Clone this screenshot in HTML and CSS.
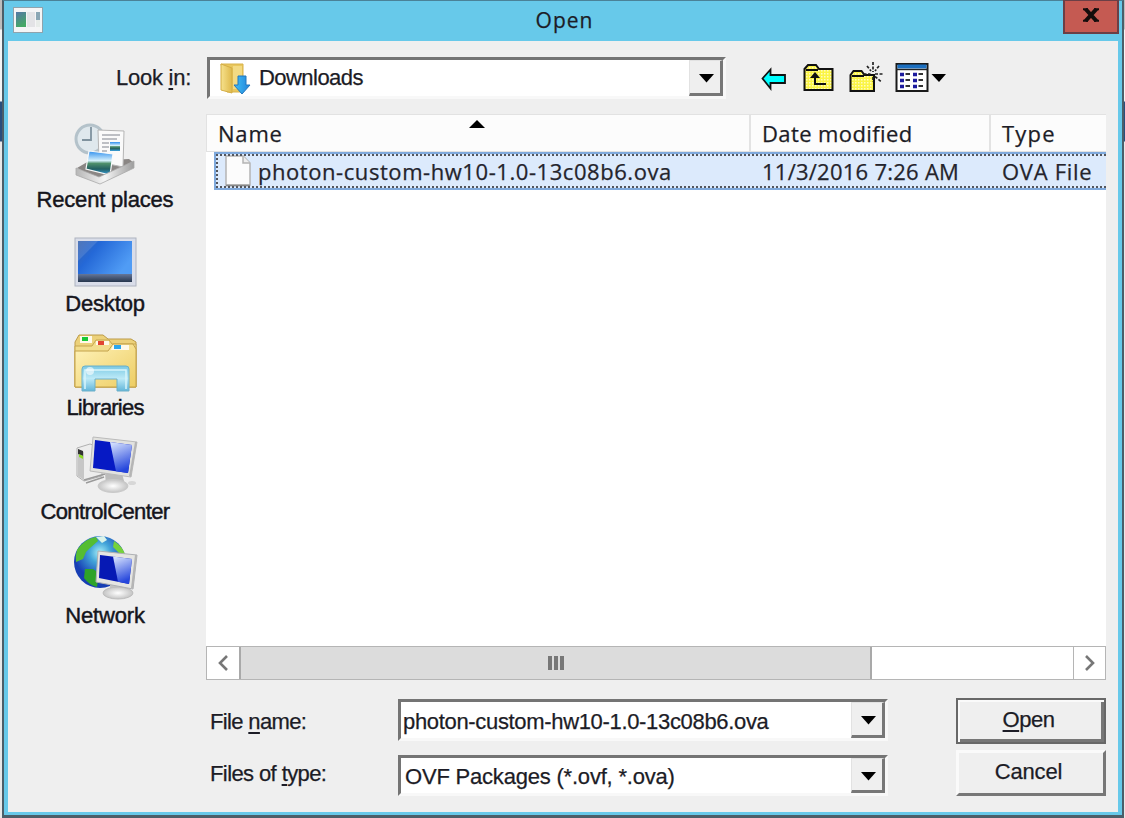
FILE: index.html
```
<!DOCTYPE html>
<html lang="en">
<head>
<meta charset="utf-8">
<title>Open</title>
<link rel="stylesheet" href="styles.css">
</head>
<body>
<div class="dialog">
  <header class="titlebar">
    <svg class="app-icon" width="32" height="28" viewBox="0 0 32 28">
      <defs><linearGradient id="app" x1="0" y1="0" x2="0.4" y2="1"><stop offset="0" stop-color="#5677a8"/><stop offset="1" stop-color="#45a866"/></linearGradient></defs>
      <rect x="1.500" y="1.500" width="29" height="25" fill="#f5f5f6" stroke="#8fa3ad"/>
      <rect x="4" y="6" width="10" height="15" fill="url(#app)"/>
      <rect x="15" y="6" width="8" height="15" fill="#e3e3e6"/>
      <rect x="24" y="6" width="4" height="8" fill="#8aa6b4"/><rect x="24" y="14" width="4" height="7" fill="#e8ece9"/>
    </svg>
    <h1 class="title ui"><span class="t-title">Open</span></h1>
    <button class="close" aria-label="Close"><svg width="16" height="14" viewBox="0 0 16 14"><path d="M2.500 1 13.500 13M13.500 1 2.500 13" stroke="#140d0c" stroke-width="4"/><path d="M0 1.200h5M11 1.200h5M0 12.800h5M11 12.800h5" stroke="#140d0c" stroke-width="2"/></svg></button>
  </header>

  <main class="body">
    <div class="look">
      <label class="look-label"><span class="t-look">Look <u>i</u>n:</span></label>
      <div class="combo combo-look">
        <svg class="folder" width="34" height="34" viewBox="0 0 34 34">
          <defs><linearGradient id="fold" x1="0" x2="1"><stop offset="0" stop-color="#f6e18c"/><stop offset="1" stop-color="#dfb94b"/></linearGradient>
          <linearGradient id="arr" x1="0" x2="1"><stop offset="0" stop-color="#3fc0f6"/><stop offset="1" stop-color="#2283da"/></linearGradient></defs>
          <path d="M3 3h22v28H9z" fill="#e9c75c" stroke="#d8b24b"/>
          <path d="M3 3l11 4v25L3 29z" fill="url(#fold)" stroke="#d4ad45"/>
          <path d="M15 5h9v23h-9z" fill="#f3da83"/>
          <path d="M20 15h8v9h4l-8 9-8-9h4z" fill="url(#arr)" stroke="#2376bd"/>
        </svg>
        <span class="combo-text t-downloads">Downloads</span>
        <span class="drop"><svg width="16" height="9" viewBox="0 0 16 9"><path d="M0 0H15L7.500 8.500z" fill="#000"/></svg></span>
      </div>
      <div class="tools">
        <svg width="26" height="40" viewBox="0 0 26 40"><path d="M1.500 20.500 9.500 11.500V17H24v8H9.500v5.500z" fill="#0ff" stroke="#111" stroke-width="1.800"/></svg>
        <svg width="32" height="40" viewBox="0 0 32 40">
          <defs><pattern id="dither" width="3" height="3" patternUnits="userSpaceOnUse"><rect width="3" height="3" fill="#fbf545"/><rect width="1.500" height="1.500" fill="#fffcc0"/></pattern></defs>
          <path d="M1.500 32V11L5 7h8l3 4h13.500v21z" fill="url(#dither)" stroke="#111" stroke-width="2"/><path d="M3 12h12" stroke="#111" stroke-width="2"/>
          <path d="M12 16v10h11" fill="none" stroke="#111" stroke-width="2"/><path d="M12 14l-5 6h10z" fill="#111"/>
        </svg>
        <svg width="34" height="40" viewBox="0 0 34 40">
          <path d="M1.500 33V17l3-4h8l3 4H25v16z" fill="url(#dither)" stroke="#111" stroke-width="2"/><path d="M3 18h12" stroke="#111" stroke-width="2"/>
          <path d="M24 4v10M24 19v5M18 8l4 5M30 8l-4 5M14.500 16h7M26 16h8M26 18.500l6 5" stroke="#222" stroke-width="1.700" stroke-dasharray="3 1.500"/>
        </svg>
        <svg width="52" height="40" viewBox="0 0 52 40">
          <rect x="1.500" y="6" width="31" height="27" fill="#fff" stroke="#1a1a1a" stroke-width="2"/><path d="M2.500 8.500h29" stroke="#1b6fc0" stroke-width="4"/><path d="M1 11.500h32" stroke="#222" stroke-width="1.400"/>
          <path d="M5 16.500h4M18 16.500h4M5 22.500h4M18 22.500h4M5 28.500h4M18 28.500h4" stroke="#1d1b9e" stroke-width="3.600"/>
          <path d="M10.500 16h4.500M23.500 16h4.500M10.500 22h4.500M23.500 22h4.500M10.500 28h4.500M23.500 28h4.500" stroke="#333" stroke-width="2"/>
          <path d="M36.500 16H51L44 24z" fill="#000"/>
        </svg>
      </div>
    </div>

    <nav class="places">
      <a class="place">
        <svg width="70" height="68" viewBox="0 0 70 68">
          <defs><linearGradient id="tray" x1="0" x2="1"><stop offset="0" stop-color="#b6b6b6"/><stop offset=".5" stop-color="#f5f5f5"/><stop offset="1" stop-color="#9d9d9d"/></linearGradient>
          <linearGradient id="photo" x1="0" y1="0" x2="0" y2="1"><stop offset="0" stop-color="#2f8fee"/><stop offset=".4" stop-color="#d5f0fb"/><stop offset=".52" stop-color="#4e8f6b"/><stop offset=".75" stop-color="#235f62"/><stop offset="1" stop-color="#3ba5e4"/></linearGradient></defs>
          <circle cx="20" cy="20" r="14" fill="#dfe8ed" stroke="#b4c2ca" stroke-width="3"/>
          <path d="M21 8v13h-9" fill="none" stroke="#7f929e" stroke-width="1.800"/>
          <path d="M7 49l12-7 40-2 5 4-34 17z" fill="#8a8684"/>
          <path d="M28 11l26 1-1 36-24-5z" fill="#fafafa" stroke="#b5b5b5"/>
          <path d="M32 16h18M32 20h15M32 24h7M32 28h7M32 32h5" stroke="#a9acb2" stroke-width="1.500"/>
          <path d="M40 23h10v9H40z" fill="url(#photo)"/>
          <path d="M19 32l24 3-3 21-24-6z" fill="url(#photo)" stroke="#f8fafa" stroke-width="1.200"/>
          <path d="M6 49l23 9 35-16v7L30 65 6 56z" fill="url(#tray)" stroke="#a9a9a9" stroke-width=".8"/>
        </svg><span class="t-recent">Recent places</span></a>
      <a class="place">
        <svg width="70" height="68" viewBox="0 0 70 68">
          <defs><linearGradient id="desk" x1="0" y1="0" x2="1" y2=".5"><stop offset="0" stop-color="#3763ae"/><stop offset=".35" stop-color="#2468d7"/><stop offset="1" stop-color="#509cf5"/></linearGradient>
          <linearGradient id="task" x1="0" y1="0" x2="0" y2="1"><stop offset="0" stop-color="#65779a"/><stop offset="1" stop-color="#27364d"/></linearGradient></defs>
          <rect x="5" y="15" width="61" height="48" fill="#d9dde9" stroke="#aeb3c0"/>
          <rect x="8" y="18" width="54" height="34" fill="url(#desk)"/><path d="M8 18h20L8 38z" fill="#fff" opacity=".12"/>
          <rect x="8" y="51" width="54" height="8" fill="url(#task)"/>
        </svg><span class="t-desktop">Desktop</span></a>
      <a class="place">
        <svg width="70" height="68" viewBox="0 0 70 68">
          <defs><linearGradient id="lib" x1="0" y1="0" x2="1" y2="1"><stop offset="0" stop-color="#fff3bb"/><stop offset="1" stop-color="#edcd63"/></linearGradient>
          <linearGradient id="clip" x1="0" y1="0" x2="0" y2="1"><stop offset="0" stop-color="#7bc9e4"/><stop offset=".5" stop-color="#bdeaf7"/><stop offset="1" stop-color="#62b6da"/></linearGradient></defs>
          <path d="M5 60V15l4-7h24l5 4h23l5 3v45z" fill="#ecd17a" stroke="#bc9b48"/>
          <path d="M10 9h12v7H10z" fill="#fff9e8"/><path d="M12 10h6v4h-6z" fill="#16c936"/>
          <path d="M5 60V19h17l4-6h13l3 4h24v43z" fill="#f2dd8d" stroke="#c6a650"/>
          <path d="M26 14h13v4H26z" fill="#fff9e8"/><path d="M28 14h6v4h-6z" fill="#e14531"/>
          <path d="M5 60V24h33l5-7h20l3 5v38z" fill="url(#lib)" stroke="#c4a24a"/>
          <path d="M43 18h16v5H41z" fill="#fff9e8"/><path d="M44 18h7v4h-7z" fill="#2ca7ed"/>
          <path d="M12 64V42q0-3 3-3h41q3 0 3 3v22H47V52H25v12z" fill="url(#clip)" stroke="#6cb0c9"/>
          <path d="M15 62V43h41v19" fill="none" stroke="#d8f5fc" stroke-width="1.500"/><circle cx="20" cy="44" r="4" fill="#fff" opacity=".6"/>
        </svg><span class="t-libraries">Libraries</span></a>
      <a class="place">
        <svg width="70" height="68" viewBox="0 0 70 68">
          <defs><linearGradient id="glare" x1="0" y1="0" x2=".3" y2="1"><stop offset="0" stop-color="#dfe9ff"/><stop offset="1" stop-color="#2546dc"/></linearGradient>
          <radialGradient id="foot"><stop offset="0" stop-color="#fff"/><stop offset="1" stop-color="#c4c4c4"/></radialGradient></defs>
          <path d="M7 17l13-4 12 4v28L14 50l-7-5z" fill="#ededed" stroke="#b1b1b1"/><path d="M8 18l6 3v28l-6-4z" fill="#c6c6c6"/><path d="M8 18l5 2v5l-5-2z" fill="#333"/><path d="M9 23l4 2v3l-4-2z" fill="#8bdb22"/>
          <path d="M14 49l21-6M16 52l18-6" stroke="#9a9a9a" stroke-width="1.500"/>
          <path d="M35 42h17l3 12H36z" fill="#bcbcbc"/>
          <ellipse cx="43" cy="55" rx="15" ry="6.500" fill="url(#foot)" stroke="#c9c9c9"/>
          <path d="M23 6l44 5-6 35-41-6z" fill="#e2e2df" stroke="#bbb"/><path d="M65 11l2 0-6 35-2-1z" fill="#b5b5b5"/>
          <path d="M25 9l37 5-4 28-35-5z" fill="#0619c4"/><path d="M40 11l22 3-4 28-12-1.700z" fill="url(#glare)"/><ellipse cx="62" cy="52" rx="4" ry="2" fill="#d7d7d7"/>
        </svg><span class="t-control">ControlCenter</span></a>
      <a class="place">
        <svg width="70" height="68" viewBox="0 0 70 68">
          <defs><radialGradient id="globe" cx=".5" cy=".32"><stop offset="0" stop-color="#a9f0f8"/><stop offset=".4" stop-color="#43a5d9"/><stop offset="1" stop-color="#173eb4"/></radialGradient></defs>
          <circle cx="30" cy="27" r="26" fill="url(#globe)"/>
          <path d="M7 15Q14 4 26 2l2 4-8 7-4 4-3 7-7 3q-1-6 1-12z" fill="#55bd32"/><path d="M15 34l8 0 6 4-2 14q-8-2-13-9z" fill="#2ea329"/><path d="M44 6q8 5 11 13l-5 0-7-7z" fill="#75d23b"/><path d="M26 2l8-1 3 4-5 3z" fill="#d9f3ea"/>
          <path d="M40 46h16v12H40z" fill="#c2c2c2"/><ellipse cx="48" cy="58" rx="15" ry="6" fill="url(#foot)" stroke="#bdbdbd"/>
          <path d="M28 16l39 4-4 34-37-7z" fill="#e5e5e2" stroke="#aeb0b4"/>
          <path d="M65 20l2 0-4 34-2-1z" fill="#b5b5b5"/><path d="M30 20l32 4-3 25-30-6z" fill="#0619b4"/><path d="M43 21.600l19 2.400-3 25-11-2.200z" fill="url(#glare)"/>
        </svg><span class="t-network">Network</span></a>
    </nav>

    <section class="list">
      <div class="columns ui">
        <span class="col c-name"><span class="t-name">Name</span><svg class="sort" width="16" height="8" viewBox="0 0 16 8"><path d="M0 8 8 0l8 8z" fill="#000"/></svg></span>
        <span class="col c-date"><span class="t-date">Date modified</span></span>
        <span class="col c-type"><span class="t-type">Type</span></span>
      </div>
      <div class="rows">
        <div class="row ui">
          <span class="cell r-name"><svg width="28" height="32" viewBox="0 0 28 32"><path d="M2 1h17l7 7v22H2z" fill="#fcfcfc" stroke="#b4b4b4" stroke-width="1.500"/><path d="M19 1v7h7" fill="#eee" stroke="#b4b4b4" stroke-width="1.500"/><path d="M2 30.500h24" stroke="#888" stroke-width="1.600"/></svg><span class="t-file">photon-custom-hw10-1.0-13c08b6.ova</span></span>
          <span class="cell r-date"><span class="t-when">11/3/2016 7:26 AM</span></span>
          <span class="cell r-type"><span class="t-ova">OVA File</span></span>
        </div>
      </div>
      <div class="scroll">
        <span class="arrow"><svg width="10" height="16" viewBox="0 0 10 16"><path d="M9 1 2 8l7 7" fill="none" stroke="#777" stroke-width="2.600"/></svg></span>
        <span class="thumb"><i></i><i></i><i></i></span>
        <span class="arrow end"><svg width="10" height="16" viewBox="0 0 10 16"><path d="M1 1 8 8l-7 7" fill="none" stroke="#777" stroke-width="2.600"/></svg></span>
      </div>
    </section>

    <form class="fields">
      <label class="field-label"><span class="t-fname">File <u>n</u>ame:</span></label>
      <div class="combo combo-name"><span class="combo-text t-value">photon-custom-hw10-1.0-13c08b6.ova</span><span class="drop"><svg width="16" height="9" viewBox="0 0 16 9"><path d="M0 0H15L7.500 8.500z" fill="#000"/></svg></span></div>
      <button type="button" class="btn primary"><span class="t-open"><u>O</u>pen</span></button>
      <label class="field-label"><span class="t-ftype">Files of <u>t</u>ype:</span></label>
      <div class="combo combo-type"><span class="combo-text t-ovf">OVF Packages (*.ovf, *.ova)</span><span class="drop"><svg width="16" height="9" viewBox="0 0 16 9"><path d="M0 0H15L7.500 8.500z" fill="#000"/></svg></span></div>
      <button type="button" class="btn"><span class="t-cancel">Cancel</span></button>
    </form>
  </main>
</div>
</body>
</html>
```
FILE: styles.css
```
* { box-sizing: border-box; }
body {
  margin: 0; width: 1125px; height: 818px; overflow: hidden; padding: 0 1px 0 2px;
  background: linear-gradient(#bdbdbd 0 29px, #f5f5f5 30px 101px, #294e7d 102px 141px, #e8e8e8 142px);
  font: 22px/26px "Liberation Sans", Arial, sans-serif; color: #1c1c26;
  -webkit-text-stroke: 0.25px currentColor;
}
svg { display: block; flex: none; }
span { white-space: nowrap; }
.ui { font-family: "Open Sans", "Noto Sans", sans-serif; }
.dialog {
  width: 1122px; height: 818px; display: flex; flex-direction: column;
  background: #67c9ea; border: 2px solid #4b5e69; border-top: 1px solid #4a8298; border-bottom-width: 3px; padding: 0 4px 3px;
}
.titlebar { height: 40px; flex: none; display: flex; align-items: flex-start; justify-content: space-between; }
.app-icon { margin: 5px 0 0 4px; }
.title { margin: 6px 0 0 22px; font-size: 21px; font-weight: 400; line-height: 26px; }
.close {
  width: 56px; height: 34px; margin: -1px -1px 0 0; padding: 0 0 3px; display: flex; align-items: center; justify-content: center;
  background: #c55a52; border: 2px solid #6b3f46; border-top-width: 1px;
}
.body {
  flex: 1; min-height: 0; background: #efefef; padding: 16px 12px 0 0;
  display: grid; grid-template-columns: 198px 900px; grid-template-rows: 57px 566px 1fr;
}
.look { grid-column: 1 / 3; display: flex; align-items: flex-start; }
.look-label { width: 199px; padding: 8px 16px 0 0; text-align: right; }
u { text-decoration-thickness: 2px; text-underline-offset: 3px; }
.combo {
  background: #fff; display: flex; align-items: center; height: 42px;
  border: 3px solid; border-color: #747474 #f8f8f8 #f8f8f8 #747474;
}
.combo-look { width: 519px; padding-left: 8px; }
.combo-look .folder { margin-right: 7px; }
.combo-text { flex: 1; }
.drop {
  width: 34px; height: 100%; flex: none; display: flex; align-items: center; justify-content: center;
  background: #efefef; border: 1px solid #e2e2e2; border-right: 3px solid #777; border-bottom: 3px solid #777;
  padding: 3px 0 0 4px;
}
.tools { display: flex; margin: 1px 0 0 35px; }
.tools svg + svg { margin-left: 16px; }
.tools svg:nth-child(3) { margin-left: 14px; }
.tools svg:nth-child(4) { margin-left: 12px; }
.places { display: flex; flex-direction: column; padding-right: 4px; }
.place { height: 104px; padding-top: 5px; display: flex; flex-direction: column; align-items: center; -webkit-text-stroke-width: 0.45px; color: #15151c; }
.list { background: #fff; display: grid; grid-template-rows: 38px 1fr 34px; min-width: 0; }
.columns { display: grid; grid-template-columns: 544px 240px 1fr; background: #fcfcfc; border: 1px solid #e2e2e2; border-right: 0; font-size: 22px; }
.col { border-right: 2px solid #e3e3e3; padding: 4px 0 0 11px; }
.c-name { display: grid; grid-template-columns: 251px auto; align-items: start; }
.c-type { border-right: 0; }
.sort { margin-top: 1px; }
.rows { padding-left: 8px; }
.row {
  height: 38px; display: grid; grid-template-columns: 546px 240px 1fr; position: relative;
  background: #dceafc; border: 2px solid #7fa9dc; border-right: 0; font-size: 22px; color: #24242c;
}
.row::after { content: ""; position: absolute; inset: 0; border: 2px dotted #54565c; border-right: 0; }
.cell { display: flex; align-items: center; }
.r-name { padding-left: 8px; }
.r-name svg { margin-right: 6px; }
.scroll { display: flex; border: 1px solid #b5b5b5; background: #fff; }
.arrow { width: 32px; display: flex; align-items: center; justify-content: center; }
.thumb { width: 633px; background: #dcdcdc; border: solid #a9a9a9; border-width: 0 2px; display: flex; align-items: center; justify-content: center; gap: 2px; }
.thumb i { width: 4px; height: 14px; background: #777; }
.end { margin-left: auto; border-left: 1px solid #b5b5b5; }
.fields {
  grid-column: 2; margin: 18px 0 0; display: grid;
  grid-template-columns: 192px 490px 218px; grid-template-rows: 46px 46px; row-gap: 6px;
}
.field-label { padding: 11px 0 0 4px; }
.combo-name { margin-top: 1px; }
.combo-type { margin-top: 5px; height: 41px; }
.combo-name .combo-text { padding-left: 2px; padding-top: 4px; }
.combo-type .combo-text { padding-left: 4px; padding-top: 2px; }
.btn {
  justify-self: end; width: 150px; height: 46px;
  font: inherit; color: inherit; background: #efefef; padding: 0 5px 2px 0;
  border: 3px solid; border-color: #fafafa #777 #777 #fafafa;
}
.primary { border: 2px solid #686868; box-shadow: inset 2px 2px #fafafa, inset -3px -3px #777; }
.t-name, .t-date, .t-type, .t-file, .t-when, .t-ova { line-height: 28px; }
.t-title { letter-spacing: 1px; }
.t-look { letter-spacing: -0.25px; }
.t-downloads { letter-spacing: -0.55px; }
.t-recent { letter-spacing: -0.2px; }
.t-desktop, .t-network { letter-spacing: -0.15px; }
.t-libraries { letter-spacing: -0.8px; }
.t-control { letter-spacing: -0.6px; }
.t-name { letter-spacing: 0.8px; }
.t-date { letter-spacing: 0.4px; }
.t-type { letter-spacing: 1.2px; }
.t-file { letter-spacing: 0.56px; }
.t-when { letter-spacing: 0.25px; }
.t-ova { letter-spacing: 0.7px; }
.t-fname { letter-spacing: -0.65px; }
.t-ftype { letter-spacing: -0.6px; }
.t-value { letter-spacing: -0.33px; }
.t-ovf { letter-spacing: -0.2px; }
.t-open { letter-spacing: -0.5px; }
.t-cancel { letter-spacing: -0.2px; }
```
